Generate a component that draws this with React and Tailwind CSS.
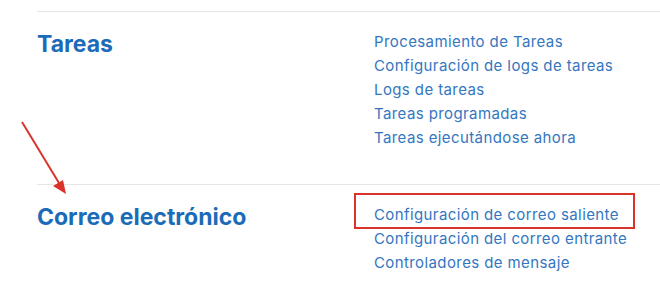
import React from 'react'

const sections = [
  {
    title: 'Tareas',
    links: [
      'Procesamiento de Tareas',
      'Configuración de logs de tareas',
      'Logs de tareas',
      'Tareas programadas',
      'Tareas ejecutándose ahora',
    ],
  },
  {
    title: 'Correo electrónico',
    links: [
      'Configuración de correo saliente',
      'Configuración del correo entrante',
      'Controladores de mensaje',
    ],
    boxed: 0,
  },
]

function Section({ title, links, boxed }) {
  return (
    <div className="flex border-t border-[#e6e6e6] pt-[18px] pb-[34px]">
      {/* título de la sección */}
      <div className="w-[337px] shrink-0">
        <h2 className="text-[23px] leading-[28px] font-bold text-[#1c6bb8]">{title}</h2>
      </div>

      {/* enlaces */}
      <ul className="flex flex-col text-[15px] leading-6 tracking-[0.4px] text-[#3476c0]">
        {links.map((link, i) => (
          <li key={link} className="relative">
            <a href="#">{link}</a>
            {boxed === i && (
              <span className="absolute left-[-20px] top-[-10px] w-[281px] h-[36px] border-2 border-[#d9342b] pointer-events-none" />
            )}
          </li>
        ))}
      </ul>
    </div>
  )
}

export default function App() {
  return (
    <div className="relative w-[660px] h-[288px] bg-white overflow-hidden font-['Inter','Liberation_Sans',sans-serif]">
      <div className="pl-[37px] pt-[11px]">
        {sections.map(s => (
          <Section key={s.title} {...s} />
        ))}
      </div>

      {/* flecha roja */}
      <svg className="absolute left-0 top-0 pointer-events-none" width="660" height="288" viewBox="0 0 660 288">
        <line x1="22" y1="122" x2="59" y2="183" stroke="#d9342b" strokeWidth="2" />
        <polygon points="66,194 53,186 63,180" fill="#d9342b" />
      </svg>
    </div>
  )
}
